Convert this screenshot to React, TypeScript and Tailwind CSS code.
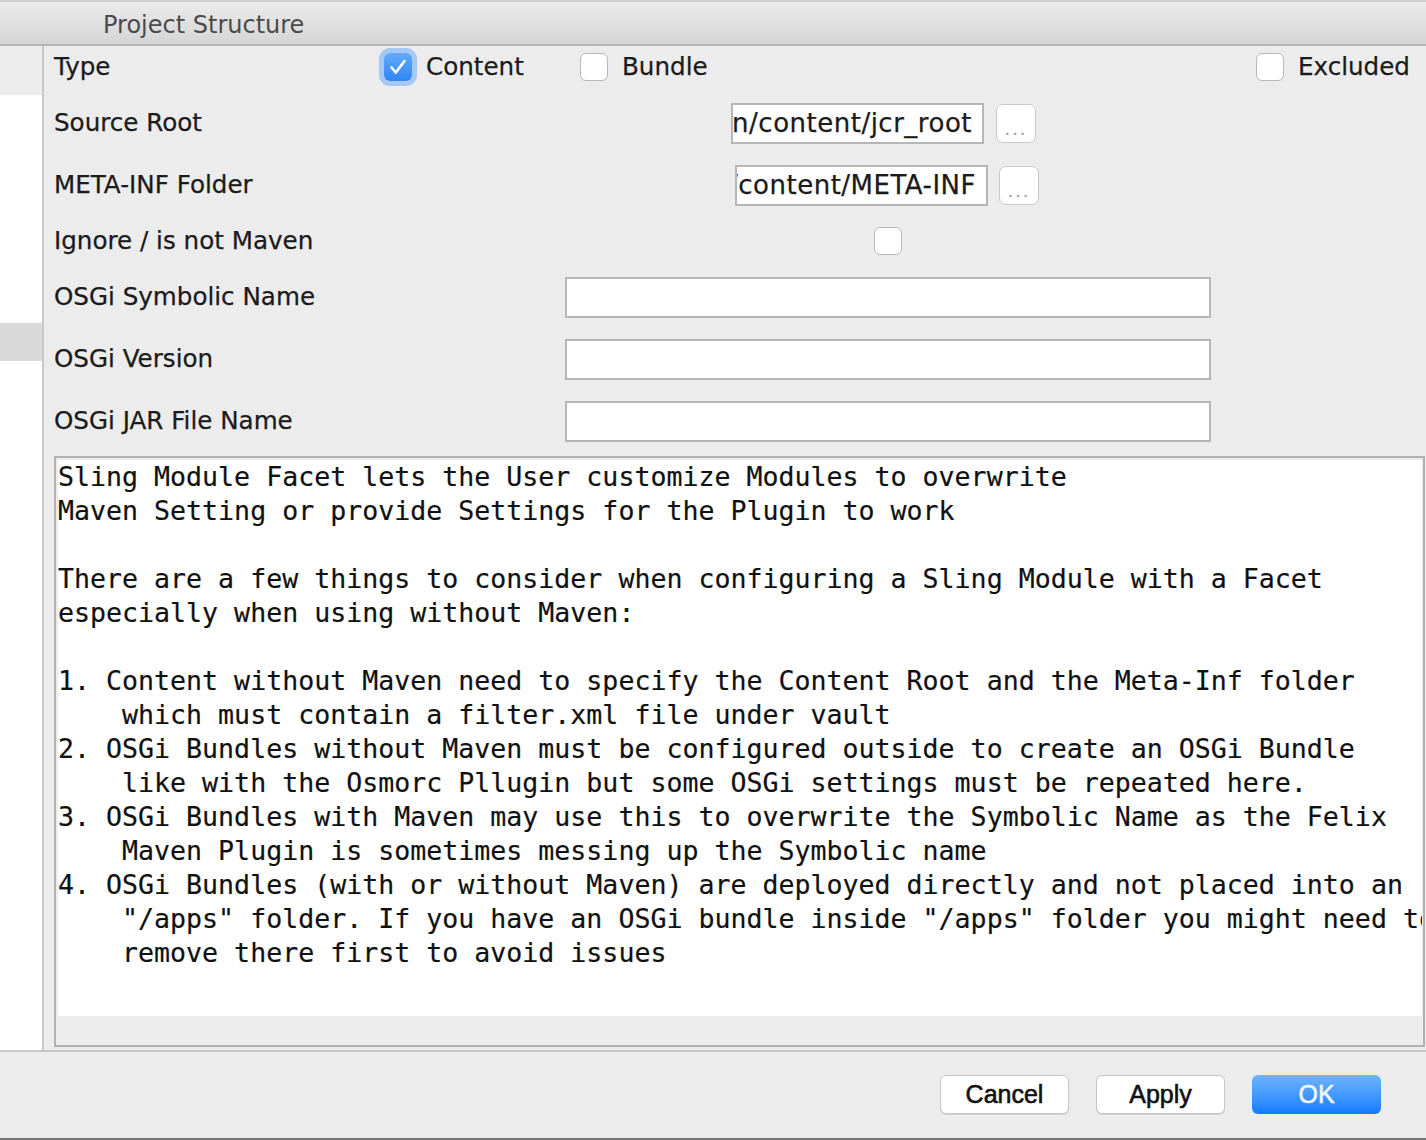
import React from 'react';

const label = "text-[24.6px] text-[#1b1b1b] whitespace-nowrap [-webkit-text-stroke:0.25px_#1b1b1b]";

const Box = ({ checked = false }: { checked?: boolean }) =>
  checked ? (
    <div className="w-[28px] h-[28px] shrink-0 rounded-[6px] bg-gradient-to-b from-[#62aafb] to-[#2f86f6] ring-[5px] ring-[#a5c8f5] flex items-center justify-center">
      <svg width="28" height="28" viewBox="0 0 28 28" fill="none">
        <path d="M7.5 14.5 L11.8 19.5 L20.5 8" stroke="white" strokeWidth="2.6" strokeLinecap="round" strokeLinejoin="round" />
      </svg>
    </div>
  ) : (
    <div className="w-[28px] h-[28px] shrink-0 rounded-[6px] bg-white border border-[#b8b8b8]" />
  );

const Dots = () => (
  <div className="w-[40px] h-[39px] shrink-0 rounded-[7px] bg-white border border-[#c9c9c9] flex items-end justify-center pb-[4px] text-[18px] text-[#9a9a9a] tracking-[2px] leading-none">
    ...
  </div>
);

const Field = ({ w, text }: { w: string; text?: string }) => (
  <div className={`${w} h-[41px] shrink-0 bg-white border-2 border-[#b6b6b6] overflow-hidden flex items-center justify-end pr-[10px]`}>
    {text && <span className="text-[26px] tracking-[0.5px] text-[#1b1b1b] whitespace-nowrap [-webkit-text-stroke:0.25px_#1b1b1b]">{text}</span>}
  </div>
);

const help = `Sling Module Facet lets the User customize Modules to overwrite
Maven Setting or provide Settings for the Plugin to work

There are a few things to consider when configuring a Sling Module with a Facet
especially when using without Maven:

1. Content without Maven need to specify the Content Root and the Meta-Inf folder
    which must contain a filter.xml file under vault
2. OSGi Bundles without Maven must be configured outside to create an OSGi Bundle
    like with the Osmorc Pllugin but some OSGi settings must be repeated here.
3. OSGi Bundles with Maven may use this to overwrite the Symbolic Name as the Felix
    Maven Plugin is sometimes messing up the Symbolic name
4. OSGi Bundles (with or without Maven) are deployed directly and not placed into an
    "/apps" folder. If you have an OSGi bundle inside "/apps" folder you might need to
    remove there first to avoid issues`;

const Btn = ({ children, primary = false }: { children: React.ReactNode; primary?: boolean }) => (
  <button
    className={
      primary
        ? "w-[129px] h-[39px] rounded-[6px] bg-gradient-to-b from-[#6db4fb] to-[#0b7bff] text-[#f2f6ff] font-['Liberation_Sans'] text-[25px] [-webkit-text-stroke:0.6px_#f2f6ff]"
        : "w-[129px] h-[39px] rounded-[6px] bg-white border border-[#c6c6c6] shadow-[0_1px_0_#d0d0d0] text-[#111] font-['Liberation_Sans'] text-[25px] [-webkit-text-stroke:0.6px_#111]"
    }
  >
    {children}
  </button>
);

export default function App() {
  return (
    <div className="w-[1426px] h-[1140px] bg-[#ececec] flex flex-col overflow-hidden font-['DejaVu_Sans',sans-serif]">
      {/* title bar */}
      <div className="h-[46px] shrink-0 border-t-2 border-t-[#cfcfcf] border-b-2 border-b-[#b4b4b4] bg-gradient-to-b from-[#ebebeb] to-[#d5d5d5] flex items-center pl-[103px] pt-[4px]">
        <span className="text-[24px] text-[#4b4b4b]">Project Structure</span>
      </div>

      <div className="h-[1004px] shrink-0 flex">
        {/* sidebar */}
        <div className="w-[42px] shrink-0 flex flex-col">
          <div className="h-[49px] bg-[#ececec]" />
          <div className="h-[228px] bg-white" />
          <div className="h-[38px] bg-[#d9d9d9]" />
          <div className="flex-1 bg-white" />
        </div>
        <div className="w-[2px] shrink-0 bg-[#c8c8c8]" />

        {/* main */}
        <div className="flex-1 min-w-0 flex flex-col pl-[10px] pr-[1px]">
          <div className="h-[42px] flex items-center">
            <div className={`w-[330px] shrink-0 ${label}`}>Type</div>
            <Box checked />
            <div className={`w-[168px] shrink-0 pl-[14px] ${label}`}>Content</div>
            <Box />
            <div className={`w-[648px] shrink-0 pl-[14px] ${label}`}>Bundle</div>
            <Box />
            <div className={`pl-[14px] ${label}`}>Excluded</div>
          </div>

          <div className="h-[70px] flex items-center">
            <div className={`w-[677px] shrink-0 ${label}`}>Source Root</div>
            <Field w="w-[253px]" text="src/main/content/jcr_root" />
            <div className="ml-[12px]"><Dots /></div>
          </div>

          <div className="h-[54px] flex items-center">
            <div className={`w-[681px] shrink-0 ${label}`}>META-INF Folder</div>
            <Field w="w-[253px]" text="src/main/content/META-INF" />
            <div className="ml-[11px]"><Dots /></div>
          </div>

          <div className="h-[58px] flex items-center">
            <div className={`w-[820px] shrink-0 ${label}`}>Ignore / is not Maven</div>
            <Box />
          </div>

          <div className="h-[54px] flex items-center">
            <div className={`w-[511px] shrink-0 ${label}`}>OSGi Symbolic Name</div>
            <Field w="w-[646px]" />
          </div>

          <div className="h-[70px] flex items-center">
            <div className={`w-[511px] shrink-0 ${label}`}>OSGi Version</div>
            <Field w="w-[646px]" />
          </div>

          <div className="h-[54px] flex items-center">
            <div className={`w-[511px] shrink-0 ${label}`}>OSGi JAR File Name</div>
            <Field w="w-[646px]" />
          </div>

          {/* description */}
          <div className="mt-[8px] h-[591px] border-2 border-[#b1b1b1] bg-[#ececec] pl-[2px] pt-[2px] pr-[1px] flex flex-col">
            <div className="flex-1 min-w-0 bg-white overflow-hidden">
              <pre className="font-['DejaVu_Sans_Mono',monospace] text-[26.6px] leading-[34px] text-[#111] whitespace-pre [-webkit-text-stroke:0.2px_#111]">
                {help}
              </pre>
            </div>
            <div className="h-[29px] shrink-0" />
          </div>
        </div>
      </div>

      <div className="h-[2px] shrink-0 bg-[#c8c8c8]" />

      {/* buttons */}
      <div className="h-[86px] shrink-0 flex items-start justify-end gap-[27px] pt-[23px] pr-[45px]">
        <Btn>Cancel</Btn>
        <Btn>Apply</Btn>
        <Btn primary>OK</Btn>
      </div>
      <div className="h-[2px] shrink-0 bg-[#737373]" />
    </div>
  );
}
